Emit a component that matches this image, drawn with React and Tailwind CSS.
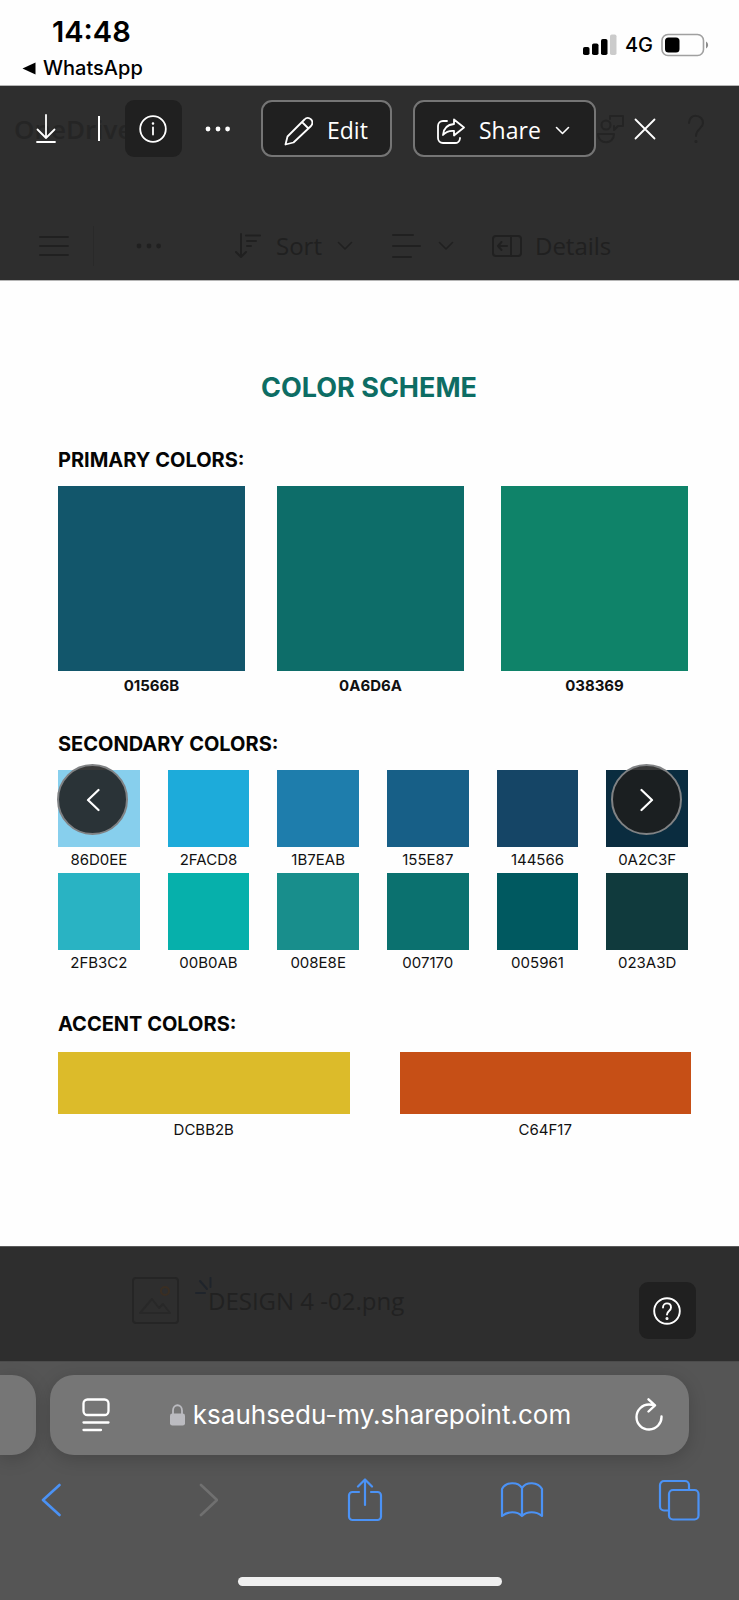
import React from "react";

const PRIMARY = [
  { code: "01566B", fill: "bg-[#12566b]" },
  { code: "0A6D6A", fill: "bg-[#0d6d69]" },
  { code: "038369", fill: "bg-[#0f8369]" },
];

const SECONDARY = [
  { code: "86D0EE", fill: "bg-[#87cfed]" },
  { code: "2FACD8", fill: "bg-[#1dabda]" },
  { code: "1B7EAB", fill: "bg-[#1e7dac]" },
  { code: "155E87", fill: "bg-[#175f87]" },
  { code: "144566", fill: "bg-[#154566]" },
  { code: "0A2C3F", fill: "bg-[#0a2c3f]" },
  { code: "2FB3C2", fill: "bg-[#29b3c3]" },
  { code: "00B0AB", fill: "bg-[#06b0ab]" },
  { code: "008E8E", fill: "bg-[#188e8c]" },
  { code: "007170", fill: "bg-[#0b716f]" },
  { code: "005961", fill: "bg-[#005960]" },
  { code: "023A3D", fill: "bg-[#103a3d]" },
];

const ACCENT = [
  { code: "DCBB2B", fill: "bg-[#dcbb2a]" },
  { code: "C64F17", fill: "bg-[#c64f16]" },
];

function Icon({ w, h, sw = 2, children }) {
  return (
    <svg
      width={w}
      height={h}
      viewBox={`0 0 ${w} ${h}`}
      fill="none"
      stroke="currentColor"
      strokeWidth={sw}
      strokeLinecap="round"
      strokeLinejoin="round"
      className="shrink-0"
      aria-hidden="true"
    >
      {children}
    </svg>
  );
}

function Dots() {
  return (
    <Icon w={26} h={6}>
      <g fill="currentColor" stroke="none">
        <circle cx="3" cy="3" r="2.4" />
        <circle cx="13" cy="3" r="2.4" />
        <circle cx="22.6" cy="3" r="2.4" />
      </g>
    </Icon>
  );
}

function ChevronDown() {
  return (
    <Icon w={16} h={10} sw={1.6}>
      <path d="M1.5 1.5 8 8l6.500-6.500" />
    </Icon>
  );
}

function StatusBar() {
  return (
    <div className="flex h-[86px] justify-between border-b border-[#b5b5b5] bg-[#fefefe] pl-[22px] pr-[30px] font-['Inter',sans-serif] text-black">
      <div className="pt-4">
        <div className="pl-[30px] text-[29px] font-semibold leading-8">14:48</div>
        <a href="#whatsapp" className="flex items-center gap-[7px] pt-2 text-[20px] font-medium leading-6">
          <svg width="14" height="13" viewBox="0 0 14 13" aria-hidden="true">
            <path d="M13.500.5v12L.5 6.500Z" fill="currentColor" />
          </svg>
          WhatsApp
        </a>
      </div>
      <div className="flex h-[90px] items-center gap-2 text-xl font-medium">
        <svg width="34" height="22" viewBox="0 0 34 22" aria-hidden="true">
          <rect x="0" y="13" width="6.500" height="8" rx="1.800" />
          <rect x="9" y="9.500" width="6.500" height="11.500" rx="1.800" />
          <rect x="18" y="5" width="6.500" height="16" rx="1.800" />
          <rect x="27" y="0.500" width="6.500" height="20.500" rx="1.800" fill="#cbcbcb" />
        </svg>
        <span>4G</span>
        <svg width="48" height="24" viewBox="0 0 48 24" aria-hidden="true">
          <rect x="1" y="1.500" width="41.500" height="21" rx="6" fill="none" stroke="#a0a0a0" strokeWidth="1.600" />
          <rect x="4" y="4.500" width="14.500" height="15" rx="3.500" />
          <path d="M45 8.500c2.800 1.500 2.800 5.500 0 7Z" fill="#8c8c8c" />
        </svg>
      </div>
    </div>
  );
}

function DimmedHeader() {
  return (
    <div className="col-start-1 row-start-1 text-[#202020]" aria-hidden="true">
      <div className="flex h-[86px] items-center justify-between pl-[14px] pr-[34px]">
        <span className="text-[26px] font-semibold text-[#252525]">OneDrive</span>
        <div className="flex items-center gap-[62px] text-[#242424]">
          <Icon w={29} h={30}>
            <circle cx="10" cy="11" r="4.500" />
            <path d="M2 20h16c0 11-16 11-16 0ZM14 2h13v10h-5l-4 4v-4M14 2v3" />
          </Icon>
          <Icon w={18} h={30}>
            <path d="M2 9c0-10 14-9 14 0 0 5.500-7 6-7 13" />
            <circle cx="9" cy="27.500" r=".6" />
          </Icon>
        </div>
      </div>
      <div className="mt-10 flex h-[68px] items-center pl-[39px] text-[24px]">
        <Icon w={30} h={22} sw={1.8}>
          <path d="M1 2h28M1 11h28M1 20h28" />
        </Icon>
        <span className="ml-6 h-10 w-px bg-[#292929]" />
        <span className="ml-[42px]">
          <Dots />
        </span>
        <span className="ml-[73px] flex items-center gap-[15px]">
          <Icon w={26} h={26}>
            <path d="M6 1v23M1 19l5 5 5-5M11 2.500h14M12 8h9M12 13h4" />
          </Icon>
          Sort
          <ChevronDown />
        </span>
        <span className="ml-[39px] flex items-center gap-[17px]">
          <Icon w={29} h={24}>
            <path d="M1 1h20M1 12h27M1 23h18" />
          </Icon>
          <ChevronDown />
        </span>
        <span className="ml-[38px] flex items-center gap-[13px]">
          <Icon w={30} h={22}>
            <rect x="1" y="1" width="28" height="20" rx="3" />
            <path d="M19 1v20M15 11H6M9.500 7 6 11l3.500 4" />
          </Icon>
          Details
        </span>
      </div>
    </div>
  );
}

function ViewerToolbar() {
  const square = "flex size-[57px] shrink-0 items-center justify-center rounded-[9px]";
  const outlined =
    "flex h-[57px] shrink-0 items-center rounded-[11px] border-2 border-[#757575] bg-[#202020] pt-1 text-[23px]";
  return (
    <div className="relative col-start-1 row-start-1 flex items-start pl-[17px] pt-[14px] text-white">
      <button type="button" aria-label="Download" className={square}>
        <Icon w={20} h={29} sw={1.8}>
          <path d="M10 1v23M1.500 15.500 10 24l8.500-8.500M1 28h18" />
        </Icon>
      </button>
      <span className="ml-6 mt-4 h-[25px] w-[2px] bg-white" />
      <button type="button" aria-label="Information" className={`${square} ml-[25px] bg-[#202020] pr-[2px]`}>
        <Icon w={28} h={28} sw={1.8}>
          <circle cx="14" cy="14" r="12.800" />
          <path d="M14 12.500v7" />
          <circle cx="14" cy="8.500" r=".7" fill="currentColor" strokeWidth="1.200" />
        </Icon>
      </button>
      <button type="button" aria-label="More actions" className={`${square} ml-[7px]`}>
        <Dots />
      </button>
      <button type="button" className={`${outlined} ml-[15px] w-[131px] gap-[14px] pl-[21px]`}>
        <Icon w={29} h={30} sw={1.8}>
          <path d="M1.500 28.500 3.500 20.500 20.500 3.500c4-4.500 10.500 1.500 6.500 6.500L9.500 26.500ZM18 6l6.500 6.500" />
        </Icon>
        Edit
      </button>
      <button type="button" className={`${outlined} ml-[21px] w-[183px] gap-[14px] pl-[22px]`}>
        <Icon w={28} h={26} sw={1.8}>
          <path d="M10 3H6a5 5 0 0 0-5 5v12a5 5 0 0 0 5 5h12a5 5 0 0 0 5-4.500V20" />
          <path d="M17 1.500 27 9.500l-10 8v-4.500c-5-.5-8 .8-11 4C6.500 10.500 10.500 6.500 17 6Z" />
        </Icon>
        Share
        <Icon w={15} h={9} sw={1.6}>
          <path d="m1.500 1.500 6 6 6-6" />
        </Icon>
      </button>
      <button type="button" aria-label="Close" className={`${square} ml-5`}>
        <Icon w={22} h={22} sw={1.8}>
          <path d="m1.500 1.500 19 19M20.500 1.500l-19 19" />
        </Icon>
      </button>
    </div>
  );
}

function Swatch({ item, box, label }) {
  return (
    <figure className="min-w-0">
      <div className={`${box} ${item.fill}`} />
      <figcaption className={`text-center text-[15px] text-[#111111] ${label}`}>{item.code}</figcaption>
    </figure>
  );
}

function NavButton({ label, side, path }) {
  return (
    <button
      type="button"
      aria-label={label}
      className={`absolute top-[483px] flex size-[71px] items-center justify-center rounded-full border-2 border-[#808284] bg-[#1e1e1e]/88 text-white ${side}`}
    >
      <Icon w={14} h={24} sw={2.2}>
        <path d={path} />
      </Icon>
    </button>
  );
}

function ColorSheet() {
  const heading = "text-xl font-bold leading-6 text-[#050505]";
  return (
    <main className="relative border-t border-[#b5b5b5] bg-[#fefefe] pb-[104px] pl-[58px] pr-[51px] pt-[89px] font-['Inter',sans-serif]">
      <h1 className="pr-2 text-center text-[27px] font-bold leading-9 text-[#0d6d64]">COLOR SCHEME</h1>
      <h2 className={`${heading} mt-[42px]`}>PRIMARY COLORS:</h2>
      <div className="mt-[14px] grid grid-cols-[219fr_224fr_187fr]">
        {PRIMARY.map((c) => (
          <div key={c.code} className="w-[187px]">
            <Swatch item={c} box="h-[185px]" label="mt-[3px] font-bold leading-6" />
          </div>
        ))}
      </div>
      <h2 className={`${heading} mt-[34px]`}>SECONDARY COLORS:</h2>
      <div className="mt-[14px] grid grid-cols-6 gap-x-[28px]">
        {SECONDARY.map((c) => (
          <Swatch key={c.code} item={c} box="h-[77px]" label="leading-[26px]" />
        ))}
      </div>
      <h2 className={`${heading} mt-9`}>ACCENT COLORS:</h2>
      <div className="-mr-[3px] mt-4 grid grid-cols-2 gap-x-[50px]">
        {ACCENT.map((c) => (
          <Swatch key={c.code} item={c} box="h-[62px]" label="mt-1 leading-6" />
        ))}
      </div>
      <NavButton label="Previous" side="left-[57px]" path="M12.500 2 2 12l10.500 10" />
      <NavButton label="Next" side="right-[57px]" path="M1.500 2 12 12 1.500 22" />
    </main>
  );
}

function FileStrip() {
  return (
    <div className="flex h-[115px] items-start justify-between border-t border-[#5a5a5a] bg-[#2e2e2e] pl-[132px] pr-[43px]">
      <div className="flex pt-[30px] text-[#212121]">
        <Icon w={47} h={47}>
          <rect x="1" y="1" width="45" height="45" rx="3" stroke="#252525" />
          <circle cx="33" cy="14" r="4" stroke="#3a2e22" />
          <path d="m8 36 12-14 7 9 4-4 7 9Z" stroke="#282828" />
        </Icon>
        <span className="-mr-1 ml-4 text-[#1f242b]">
          <Icon w={17} h={18}>
            <path d="M15.500 1v9M5 4l7 8M1 16h9" />
          </Icon>
        </span>
        <span className="pt-2 text-[24px] leading-8">DESIGN 4 -02.png</span>
      </div>
      <button
        type="button"
        aria-label="Help"
        className="mt-[35px] flex size-[57px] items-center justify-center rounded-[9px] bg-[#202020] pr-[2px] text-white"
      >
        <Icon w={28} h={28} sw={1.9}>
          <circle cx="14" cy="14" r="12.800" />
          <path d="M10 10.500c0-5.500 8-5.500 8 0 0 3.500-4 3.500-4 7" />
          <circle cx="14" cy="21.500" r=".6" fill="currentColor" />
        </Icon>
      </button>
    </div>
  );
}

function BrowserBar() {
  const tool = "flex size-11 items-center justify-center";
  return (
    <footer className="border-t border-[#4c4c4c] bg-[#555555] pt-[13px] font-['Inter',sans-serif]">
      <div className="flex gap-[14px] pr-[50px]">
        <div className="h-20 w-9 rounded-r-3xl bg-[#767676] shadow-[0_4px_18px_rgba(0,0,0,0.18)]" />
        <div className="flex h-20 min-w-0 flex-1 items-center rounded-3xl bg-[#767676] pl-8 pr-[26px] text-white shadow-[0_4px_18px_rgba(0,0,0,0.18)]">
          <button type="button" aria-label="Page settings">
            <Icon w={28} h={34} sw={2.3}>
              <rect x="1.500" y="1.500" width="25" height="15.500" rx="4" />
              <path d="M1.500 24.500h25M1.500 32h17.500" />
            </Icon>
          </button>
          <div className="flex min-w-0 flex-1 items-center justify-center gap-2 pr-1">
            <svg width="15" height="22" viewBox="0 0 15 22" className="shrink-0" aria-hidden="true">
              <rect x="0" y="9.500" width="15" height="12" rx="2.300" fill="#bbbbc0" />
              <path d="M3 10V6.500c0-7 9-7 9 0V10" fill="none" stroke="#bbbbc0" strokeWidth="1.800" />
            </svg>
            <input
              type="text"
              aria-label="Address"
              defaultValue="ksauhsedu-my.sharepoint.com"
              className="field-sizing-content min-w-0 bg-transparent text-[26px] leading-9 outline-none"
            />
          </div>
          <button type="button" aria-label="Reload">
            <Icon w={28} h={34} sw={2.4}>
              <path d="M26.500 18.500A12.500 12.500 0 1 1 14 6.500c2 0 4 .3 6 .8M13.500 1.300l6.500 6-6.500 6.200" />
            </Icon>
          </button>
        </div>
      </div>
      <nav className="flex items-center justify-between pb-[55px] pl-[29px] pr-[38px] pt-[23px] text-[#4b92f5]">
        <button type="button" aria-label="Back" className={tool}>
          <Icon w={20} h={34} sw={2.6}>
            <path d="M18.500 2 2 17l16.500 15" />
          </Icon>
        </button>
        <button type="button" aria-label="Forward" className={`${tool} text-[#707070]`} disabled>
          <Icon w={20} h={34} sw={2.6}>
            <path d="m3 2 16 15L3 32" />
          </Icon>
        </button>
        <button type="button" aria-label="Share page" className={tool}>
          <Icon w={36} h={44} sw={2.2}>
            <path d="M12 14H5.500A3.500 3.500 0 0 0 2 17.500v21A3.500 3.500 0 0 0 5.500 42h25a3.500 3.500 0 0 0 3.500-3.500v-21a3.500 3.500 0 0 0-3.500-3.500H24" />
            <path d="M18 27V2M11 8.500 18 1.500l7 7" />
          </Icon>
        </button>
        <button type="button" aria-label="Bookmarks" className={tool}>
          <Icon w={44} h={38} sw={2.2}>
            <path d="M22 7v28c-5-5-14-5-20 0V8C6 .5 18 .5 22 7ZM22 7c4-6.500 16-6.500 20 1v27c-6-5-15-5-20 0" />
          </Icon>
        </button>
        <button type="button" aria-label="Tabs" className={tool}>
          <Icon w={42} h={42} sw={2.2}>
            <rect x="11" y="11" width="29.500" height="29.500" rx="4" />
            <path d="M31 10.500V6a4 4 0 0 0-4-4H6a4 4 0 0 0-4 4v21.500a4 4 0 0 0 4 4h4.500" />
          </Icon>
        </button>
      </nav>
      <div className="pb-[14px]">
        <div className="mx-auto h-[9px] w-[264px] rounded-full bg-[#f0f0f0]" />
      </div>
    </footer>
  );
}

export default function App() {
  return (
    <div className="bg-[#555555] font-['Open_Sans','Noto_Sans',sans-serif]">
      <StatusBar />
      <header className="grid bg-[#2e2e2e]">
        <DimmedHeader />
        <ViewerToolbar />
      </header>
      <ColorSheet />
      <FileStrip />
      <BrowserBar />
    </div>
  );
}
